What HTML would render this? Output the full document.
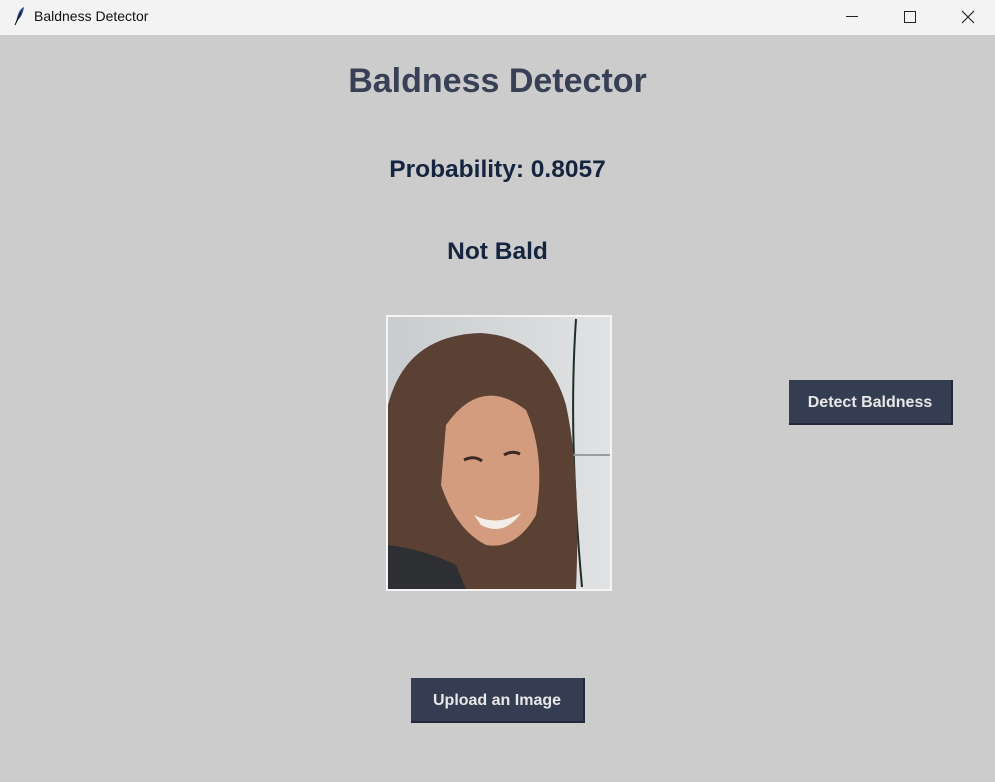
<!DOCTYPE html>
<html><head><style>
body{margin:0;width:995px;height:782px;background:#cccccc;font-family:"Liberation Sans",Arial,sans-serif;position:relative;overflow:hidden}
.tb{position:absolute;left:0;top:0;width:995px;height:35px;background:#f3f3f3}
.tb span{position:absolute;left:34px;top:8px;font-size:14px;color:#111}
.t{position:absolute;left:0;width:995px;text-align:center;font-weight:bold}
.btn{position:absolute;background:#343d52;color:#e8e8e8;font-weight:bold;font-size:16px;text-align:center;border-bottom:2px solid #22283a;border-right:2px solid #22283a;box-sizing:border-box}
</style></head><body>
<div class="tb">
<svg style="position:absolute;left:12px;top:6px" width="14" height="20" viewBox="0 0 14 20"><path d="M3 19 L5 12 Q7 3 12 1 Q11 9 6 14 Z" fill="#2a4a8a"/><path d="M3 19 L9 6" stroke="#111" stroke-width="1"/></svg>
<span>Baldness Detector</span>
<svg style="position:absolute;left:846px;top:10px" width="130" height="14">
<line x1="0" y1="6.5" x2="12" y2="6.5" stroke="#222" stroke-width="1"/>
<rect x="58.5" y="1.5" width="11" height="11" fill="none" stroke="#222" stroke-width="1"/>
<path d="M116 1 L128 13 M128 1 L116 13" stroke="#222" stroke-width="1.2"/>
</svg>
</div>
<div class="t" style="top:62px;font-size:34px;color:#374054">Baldness Detector</div>
<div class="t" style="top:156px;font-size:24.5px;color:#15243f">Probability: 0.8057</div>
<div class="t" style="top:238px;font-size:24.5px;color:#15243f">Not Bald</div>
<svg style="position:absolute;left:386px;top:315px" width="226" height="276" viewBox="0 0 226 276">
<rect width="226" height="276" fill="#f4f4f4"/>
<defs><linearGradient id="bg" x1="0" y1="0" x2="1" y2="0"><stop offset="0" stop-color="#c9ccce"/><stop offset="1" stop-color="#e0e2e3"/></linearGradient></defs>
<rect x="2" y="2" width="222" height="272" fill="url(#bg)"/>
<path d="M190 4 Q182 120 196 272" stroke="#1f2d28" stroke-width="2" fill="none"/>
<line x1="184" y1="140" x2="224" y2="140" stroke="#9a9da0" stroke-width="2"/>
<path d="M2 274 L2 90 Q20 20 95 18 Q160 22 180 90 Q195 160 190 274 Z" fill="#5a4134"/>
<path d="M60 110 Q95 60 140 95 Q160 140 150 200 Q130 235 100 230 Q70 215 55 170 Z" fill="#d49c7e"/>
<path d="M2 230 Q40 235 70 250 L80 274 L2 274 Z" fill="#2e2f33"/>
<path d="M88 200 Q110 212 135 198 Q118 222 95 210 Z" fill="#f4eee8"/>
<path d="M78 145 Q88 140 96 146 M118 140 Q126 135 134 139" stroke="#3a2a22" stroke-width="3" fill="none"/>
</svg>
<div class="btn" style="left:789px;top:380px;width:164px;height:45px;line-height:46px">Detect Baldness</div>
<div class="btn" style="left:411px;top:678px;width:174px;height:45px;line-height:46px">Upload an Image</div>
</body></html>
